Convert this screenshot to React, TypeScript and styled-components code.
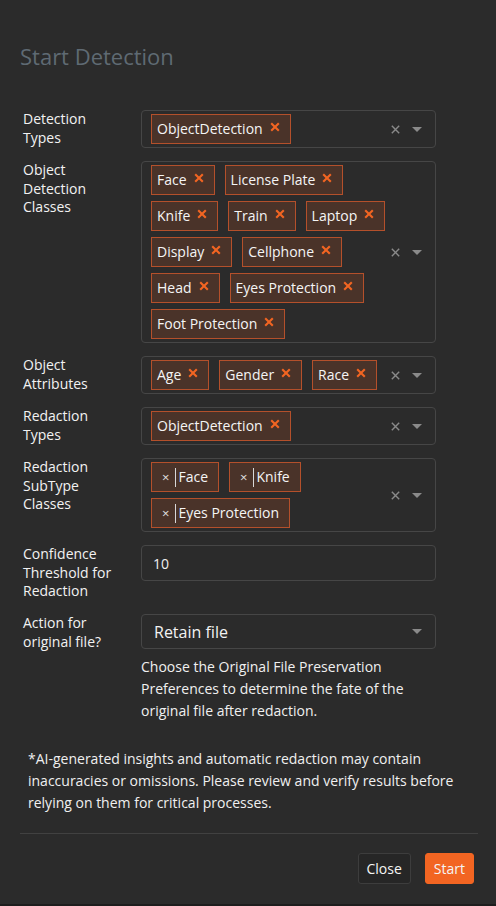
import styled, { createGlobalStyle } from "styled-components";

const GlobalStyle = createGlobalStyle`
  html, body {
    margin: 0;
    padding: 0;
    background: #1d1d1d;
  }
  body {
    font-family: "Open Sans", "Noto Sans", sans-serif;
    -webkit-font-smoothing: antialiased;
  }
  * {
    box-sizing: border-box;
  }
`;

type SelectField = {
  label: string;
  tags: string[];
  leadRemove?: boolean;
};

const fields: SelectField[] = [
  { label: "Detection Types", tags: ["ObjectDetection"] },
  {
    label: "Object Detection Classes",
    tags: [
      "Face",
      "License Plate",
      "Knife",
      "Train",
      "Laptop",
      "Display",
      "Cellphone",
      "Head",
      "Eyes Protection",
      "Foot Protection",
    ],
  },
  { label: "Object Attributes", tags: ["Age", "Gender", "Race"] },
  { label: "Redaction Types", tags: ["ObjectDetection"] },
  {
    label: "Redaction SubType Classes",
    tags: ["Face", "Knife", "Eyes Protection"],
    leadRemove: true,
  },
];

function RemoveIcon() {
  return (
    <TagX width="10" height="10" viewBox="0 0 10 10">
      <path d="M1.2 1.2 L8.8 8.8 M8.8 1.2 L1.2 8.8" stroke="#f26522" strokeWidth="2.1" />
    </TagX>
  );
}

function ClearIcon() {
  return (
    <svg width="9" height="9" viewBox="0 0 9 9">
      <path d="M0.8 0.8 L8.2 8.2 M8.2 0.8 L0.8 8.2" stroke="#8a8a8a" strokeWidth="1.4" />
    </svg>
  );
}

function Caret() {
  return (
    <svg width="10" height="5" viewBox="0 0 10 5">
      <polygon points="0,0 10,0 5,5" fill="#8a8a8a" />
    </svg>
  );
}

function MultiSelect({ tags, leadRemove }: { tags: string[]; leadRemove?: boolean }) {
  return (
    <MultiBox>
      <ValueWrap>
        {tags.map((t) =>
          leadRemove ? (
            <Tag key={t} $lead>
              <LeadX>×</LeadX>
              <TagBar />
              {t}
            </Tag>
          ) : (
            <Tag key={t}>
              {t}
              <RemoveIcon />
            </Tag>
          )
        )}
      </ValueWrap>
      <Indicators>
        <ClearIcon />
        <Caret />
      </Indicators>
    </MultiBox>
  );
}

export default function App() {
  return (
    <>
      <GlobalStyle />
      <Modal>
        <Header>
          <Title>Start Detection</Title>
        </Header>
        <Body>
          {fields.map((f) => (
            <FormRow key={f.label}>
              <Label>{f.label}</Label>
              <FieldCol>
                <MultiSelect tags={f.tags} leadRemove={f.leadRemove} />
              </FieldCol>
            </FormRow>
          ))}
          <FormRow>
            <Label>Confidence Threshold for Redaction</Label>
            <FieldCol>
              <Input defaultValue="10" />
            </FieldCol>
          </FormRow>
          <FormRow $last>
            <Label>Action for original file?</Label>
            <FieldCol>
              <Select>
                <span>Retain file</span>
                <Caret />
              </Select>
              <Helper>
                Choose the Original File Preservation Preferences to determine the fate of
                the original file after redaction.
              </Helper>
            </FieldCol>
          </FormRow>
          <Disclaimer>
            *AI-generated insights and automatic redaction may contain inaccuracies or
            omissions. Please review and verify results before relying on them for critical
            processes.
          </Disclaimer>
        </Body>
        <Footer>
          <Button>Close</Button>
          <Button $primary>Start</Button>
        </Footer>
      </Modal>
    </>
  );
}

const Modal = styled.div`
  width: 496px;
  background: #2b2b2b;
  color: #f0f0f0;
`;

const Header = styled.div`
  padding: 41px 20px 0;
`;

const Title = styled.h4`
  margin: 0;
  font-size: 22px;
  font-weight: 400;
  line-height: 30px;
  color: #5f6a73;
`;

const Body = styled.div`
  padding: 39px 20px 0;
`;

const FormRow = styled.div<{ $last?: boolean }>`
  display: flex;
  align-items: flex-start;
  margin-bottom: ${(p) => (p.$last ? "0" : "13px")};
`;

const Label = styled.div`
  width: 121px;
  flex-shrink: 0;
  padding: 0 20px 0 3px;
  font-size: 14px;
  line-height: 18.7px;
  color: #f2f2f2;
`;

const FieldCol = styled.div`
  width: 295px;
`;

const MultiBox = styled.div`
  display: flex;
  align-items: center;
  min-height: 38px;
  border: 1px solid #464646;
  border-radius: 4px;
`;

const ValueWrap = styled.div`
  flex: 1;
  display: flex;
  flex-wrap: wrap;
  gap: 6px 10px;
  padding: 3px 0 3px 9px;
`;

const Indicators = styled.div`
  display: flex;
  align-items: center;
  gap: 12px;
  padding: 0 13px 0 0;
`;

const Tag = styled.div<{ $lead?: boolean }>`
  display: inline-flex;
  align-items: center;
  height: 30px;
  padding: ${(p) => (p.$lead ? "0 10px" : "0 10px 0 5px")};
  gap: ${(p) => (p.$lead ? "0" : "7px")};
  border: 1px solid #b4502b;
  background: #4a3329;
  color: #f5f5f5;
  font-size: 14px;
  line-height: 28px;
  white-space: nowrap;
`;

const TagX = styled.svg`
  align-self: flex-start;
  margin-top: 7px;
`;

const LeadX = styled.span`
  font-size: 13px;
  color: #e0e0e0;
  margin-right: 6px;
`;

const TagBar = styled.span`
  width: 1px;
  height: 19px;
  background: #d8d8d8;
  margin-right: 2px;
`;

const Input = styled.input`
  display: block;
  width: 100%;
  height: 36px;
  padding: 0 11px;
  border: 1px solid #464646;
  border-radius: 4px;
  background: transparent;
  color: #f0f0f0;
  font-family: "Open Sans", "Noto Sans", sans-serif;
  font-size: 14px;
  outline: none;
`;

const Select = styled.div`
  display: flex;
  align-items: center;
  justify-content: space-between;
  height: 35px;
  padding: 0 13px 0 12px;
  border: 1px solid #464646;
  border-radius: 4px;
  font-size: 16px;
  color: #f2f2f2;
`;

const Helper = styled.div`
  margin-top: 7px;
  font-size: 14px;
  line-height: 22px;
  color: #f0f0f0;
`;

const Disclaimer = styled.p`
  margin: 26px 8px 0;
  font-size: 14px;
  line-height: 22px;
  color: #f0f0f0;
`;

const Footer = styled.div`
  display: flex;
  justify-content: flex-end;
  gap: 14px;
  margin: 19px 18px 0 20px;
  padding: 19px 4px 20px 0;
  border-top: 1px solid #414141;
`;

const Button = styled.button<{ $primary?: boolean }>`
  height: 31px;
  padding: 0 8px;
  border-radius: 3px;
  border: 1px solid ${(p) => (p.$primary ? "#f26522" : "#3d3d3d")};
  background: ${(p) => (p.$primary ? "#f26522" : "#262626")};
  color: #f5f5f5;
  font-family: "Open Sans", "Noto Sans", sans-serif;
  font-size: 14px;
  cursor: pointer;
`;
